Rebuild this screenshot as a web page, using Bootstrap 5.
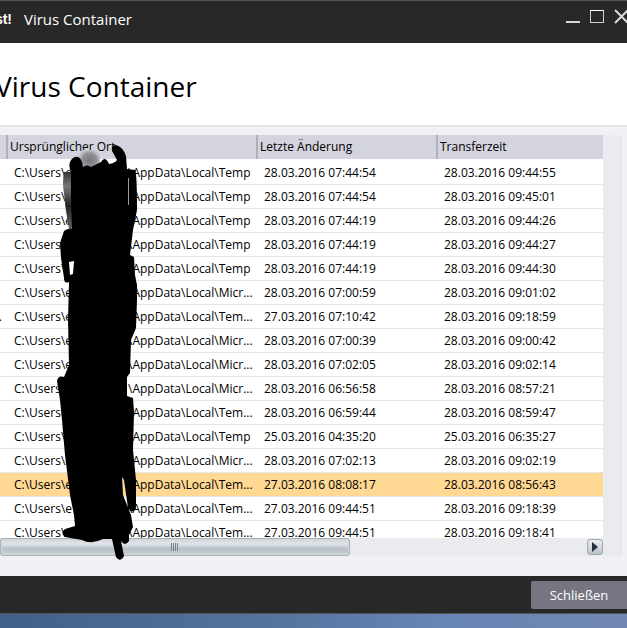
<!DOCTYPE html>
<html lang="de">
<head>
<meta charset="utf-8">
<meta name="viewport" content="width=device-width, initial-scale=1">
<title>Virus Container</title>
<link rel="stylesheet" href="https://cdn.jsdelivr.net/npm/bootstrap@5.3.0/dist/css/bootstrap.min.css">
<style>
body { font-family: "Open Sans", "Noto Sans", sans-serif; font-size: 12px; color: #000; background: #f0f0f5; }
.titlebar { height: 43px; padding-bottom: 5px; background: #282828; border-top: 1px solid #555; color: #fff; font-size: 14px; }
.brand-part { width: 12px; direction: rtl; font-weight: 700; font-family: "Liberation Sans", sans-serif; }
.caption { margin-left: 12px; font-size: 15px; }
.win-btn { width: 24px; height: 24px; border: 0; background: none; }
.win-tools { margin: -8px -6px 0 0; }
.heading { height: 84px; background: #fff; border-bottom: 2px solid #e6e6e8; }
.heading h1 { font-size: 28px; line-height: 36px; margin: 3px 0 0 -5px; font-weight: 400; }
.content { padding: 8px 5px 20px 0; }
.panel { background: #eaebef; border-right: 1px solid #e0e1e6; border-radius: 0 4px 4px 0; padding-right: 18px; }
.quarantine { table-layout: fixed; width: 100%; background: #fff; border-collapse: separate; border-spacing: 0; }
.quarantine th { height: 24px; padding: 0 2px 1px; background: #d4d4de; font-weight: 400; line-height: 23px; border-left: 2px solid #aeaebc; }
.quarantine th:first-child { border-left: 0; }
.quarantine td { height: 24px; padding: 0 8px; line-height: 23px; border-bottom: 1px solid #e6e6e9; white-space: nowrap; overflow: hidden; }
.quarantine td:first-child { padding: 0 4px 0 0; direction: rtl; }
.quarantine .lead-gap td { height: 2px; border: 0; padding: 0; }
.quarantine .chosen td { background: #ffd893; }
.c-name { width: 6px; }
.c-path { width: 250px; }
.c-date { width: 180px; }
.user-part { width: 114px; }
.hscroll { height: 18px; }
.thumb { width: 58%; height: 18px; border: 1px solid #a9afb5; border-radius: 3px; background: linear-gradient(#cfd4d8, #dfe2e6 25%, #d5d9de 45%, #b9c2ca 55%, #bcc5cd 75%, #ced3d8); box-shadow: inset 0 0 1px 1px #d4d8dc; }
.step { width: 16px; height: 16px; padding: 0; border: 1px solid #a0a8ae; border-radius: 3px; background: linear-gradient(#eceef0, #b9c3ca); }
.footer-bar { height: 38px; background: #282828; border-bottom: 1px solid #555; }
.btn-close-dialog { width: 96px; height: 28px; padding: 0; background: #767582; color: #fff; border: 0; border-radius: 2px 0 0 2px; font-size: 13px; line-height: 28px; }
.desktop { height: 14px; background: linear-gradient(90deg, #405f8b, #55749f 45%, #6885b5 70%, #7187b2); }
.scribble { left: 56px; top: 13px; pointer-events: none; }
</style>
<script src="https://cdn.jsdelivr.net/npm/bootstrap@5.3.0/dist/js/bootstrap.bundle.min.js"></script>
</head>
<body class="d-flex flex-column vh-100 overflow-hidden">
<header class="titlebar d-flex align-items-center flex-shrink-0">
  <div class="brand-part overflow-hidden"><bdi dir="ltr">st!</bdi></div>
  <div class="caption flex-grow-1">Virus Container</div>
  <div class="win-tools d-flex">
    <button class="win-btn p-0" aria-label="Minimieren"><svg class="d-block" width="24" height="24"><path d="M5 18h14" stroke="#d8d8d8" stroke-width="2"/></svg></button>
    <button class="win-btn p-0" aria-label="Maximieren"><svg class="d-block" width="24" height="24" fill="none"><path d="M5.500 6v13M18.500 6v13M5 18.500h14" stroke="#d0d0d0"/><path d="M5 6.500h14" stroke="#fff"/></svg></button>
    <button class="win-btn p-0" aria-label="Schließen"><svg class="d-block" width="24" height="24"><path d="M6 6l13 13M19 6L6 19" stroke="#d8d8d8" stroke-width="2"/></svg></button>
  </div>
</header>
<section class="heading d-flex align-items-center flex-shrink-0"><h1>Virus Container</h1></section>
<main class="content d-flex flex-column flex-grow-1 overflow-hidden">
  <div class="panel position-relative d-flex flex-column flex-grow-1 h-100">
    <div class="flex-grow-1 overflow-hidden">
      <table class="quarantine">
        <colgroup><col class="c-name"><col class="c-path"><col class="c-date"><col></colgroup>
        <thead><tr><th></th><th>Ursprünglicher Ort</th><th>Letzte Änderung</th><th>Transferzeit</th></tr></thead>
        <tbody id="entries"><tr class="lead-gap"><td colspan="4"></td></tr></tbody>
      </table>
    </div>
    <div class="hscroll d-flex justify-content-between align-items-center flex-shrink-0">
      <div class="thumb d-flex align-items-center justify-content-center"><svg width="8" height="8"><path d="M.5 0v8M2.500 0v8M4.500 0v8M6.500 0v8" stroke="#7c8288"/></svg></div>
      <button class="step d-flex align-items-center justify-content-center" aria-label="Nach rechts"><svg width="6" height="10"><path d="M0 0l6 5-6 5z" fill="#26313a"/></svg></button>
    </div>
    <svg class="scribble position-absolute" width="84" height="412" viewBox="56 148 84 412" overflow="visible" aria-hidden="true">
      <defs>
        <radialGradient id="smudge"><stop offset="0" stop-color="#77777b"/><stop offset=".7" stop-color="#929298"/><stop offset="1" stop-color="#c4c4cc"/></radialGradient>
        <linearGradient id="shade" x2="0" y2="1"><stop offset="0" stop-color="#333"/><stop offset=".25" stop-color="#777"/><stop offset=".6" stop-color="#222"/><stop offset="1" stop-color="#666"/></linearGradient>
      </defs>
      <rect x="79" y="150" width="21" height="20" rx="6" fill="url(#smudge)"/>
      <path d="M64 172h10v57h-5q-4-22-5-36-2-10 0-21z" fill="url(#shade)"/>
      <path d="M71 172Q67 163 73 158Q79 154 82 162L83 167Q87 164 91 167L101 162Q105 155 109 164Q115 163 117 160L112 151Q111 145 116 145Q123 147 126 156L127 169L135 170Q137 172 137 210L133 230L130 255L134 257L135 275L137 285V300L136 328L131 340L130 373L127 377V396L133 398L134 412L133 450L136 480V508Q132 515 128 508L124 480L122 477L123 495L131 515L133 527L129 535L129 541Q125 547 121 541L124 556Q120 563 116 557L112 539L103 539Q91 545 82 540L65 537Q60 533 65 529L75 526L74 515L70 495L65 455L62 420L60 400L57 381Q58 375 64 377L69 365L68 320L69 282Q64 284 64 278L61 258L60 243L64 231Q68 228 72 229L71 200Z"/>
      <path d="M128 178h1v27h-1z" fill="#999"/><path d="M69 262l5-1-1 13-3 1z" fill="#fff"/>
    </svg>
  </div>
</main>
<footer class="footer-bar d-flex align-items-center justify-content-end flex-shrink-0"><button class="btn-close-dialog">Schließen</button></footer>
<div class="desktop flex-shrink-0"></div>
<script>
const entries = [
  ["Temp", "28.03.2016 07:44:54", "28.03.2016 09:44:55"],
  ["Temp", "28.03.2016 07:44:54", "28.03.2016 09:45:01"],
  ["Temp", "28.03.2016 07:44:19", "28.03.2016 09:44:26"],
  ["Temp", "28.03.2016 07:44:19", "28.03.2016 09:44:27"],
  ["Temp", "28.03.2016 07:44:19", "28.03.2016 09:44:30"],
  ["Micr...", "28.03.2016 07:00:59", "28.03.2016 09:01:02"],
  ["Tem...", "27.03.2016 07:10:42", "28.03.2016 09:18:59", "."],
  ["Micr...", "28.03.2016 07:00:39", "28.03.2016 09:00:42"],
  ["Micr...", "28.03.2016 07:02:05", "28.03.2016 09:02:14"],
  ["Micr...", "28.03.2016 06:56:58", "28.03.2016 08:57:21"],
  ["Tem...", "28.03.2016 06:59:44", "28.03.2016 08:59:47"],
  ["Temp", "25.03.2016 04:35:20", "25.03.2016 06:35:27"],
  ["Micr...", "28.03.2016 07:02:13", "28.03.2016 09:02:19"],
  ["Tem...", "27.03.2016 08:08:17", "28.03.2016 08:56:43"],
  ["Tem...", "27.03.2016 09:44:51", "28.03.2016 09:18:39"],
  ["Tem...", "27.03.2016 09:44:51", "28.03.2016 09:18:41"]
];
document.getElementById("entries").insertAdjacentHTML("beforeend", entries.map(([dir, changed, moved, name = ""], i) =>
  `<tr${i === 13 ? ' class="chosen"' : ""}><td>${name}</td><td><div class="d-flex"><span class="user-part flex-shrink-0">C:\\Users\\e</span><span>\\AppData\\Local\\${dir}</span></div></td><td>${changed}</td><td>${moved}</td></tr>`).join(""));
</script>
</body>
</html>
